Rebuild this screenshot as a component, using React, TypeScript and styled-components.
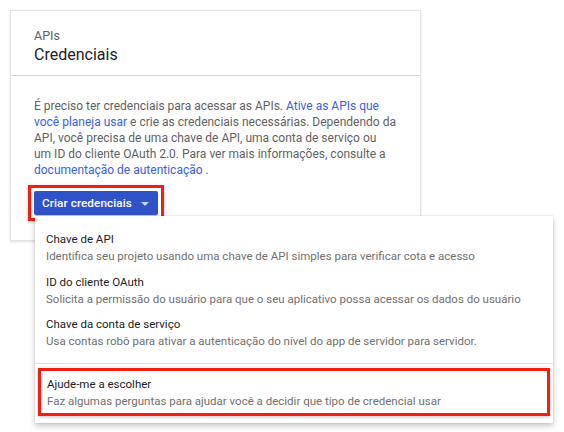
import React from "react";
import styled, { createGlobalStyle } from "styled-components";

const Global = createGlobalStyle`
  html, body { margin: 0; padding: 0; background: #ffffff; }
  body { font-family: Roboto, "Noto Sans", Arial, sans-serif; -webkit-font-smoothing: antialiased; }
  * { box-sizing: border-box; }
`;

const Page = styled.div`
  padding: 10px 0 0 10px;
  width: 564px;
  height: 432px;
`;

const Card = styled.section`
  width: 411px;
  height: 231px;
  border: 1px solid #e4e4e4;
  background: #fff;
  box-shadow: 0 1px 2px rgba(0, 0, 0, 0.12);
  display: flex;
  flex-direction: column;
`;

const Header = styled.header`
  padding: 18px 23px 9px;
  border-bottom: 1px solid #d6d6d6;
  display: flex;
  flex-direction: column;
`;

const Eyebrow = styled.div`
  font-size: 12.5px;
  line-height: 14px;
  color: #5f5f5f;
`;

const Title = styled.h1`
  margin: 0;
  font-size: 16px;
  font-weight: 400;
  line-height: 23px;
  color: #212121;
`;

const Body = styled.div`
  padding: 22px 23px 0;
  display: flex;
  flex-direction: column;
  align-items: flex-start;
`;

const Para = styled.p`
  margin: 0;
  font-size: 12px;
  line-height: 16px;
  color: #5f5f5f;
  white-space: nowrap;
`;

const Link = styled.a`
  color: #3b60d6;
  text-decoration: none;
`;

const Highlight = styled.div`
  position: relative;
  border: 3px solid #f01f0f;
  padding: 3px;
  margin-top: 7px;
  margin-left: -6px;
  box-shadow: 0 1px 3px rgba(0, 0, 0, 0.25);
`;

const Button = styled.button`
  display: flex;
  align-items: center;
  gap: 9px;
  height: 24px;
  padding: 0 9px 0 8px;
  border: none;
  border-radius: 2px;
  background: #2f52c6;
  color: #fff;
  font-family: Roboto, "Noto Sans", Arial, sans-serif;
  font-size: 11.7px;
  font-weight: 500;
  letter-spacing: 0.1px;
  box-shadow: 0 1px 1px rgba(0, 0, 0, 0.2);
`;

const Caret = styled.span`
  width: 0;
  height: 0;
  border-left: 4px solid transparent;
  border-right: 4px solid transparent;
  border-top: 4px solid #c9d3f2;
  margin-top: 1px;
`;

const Menu = styled.div`
  position: absolute;
  top: calc(100% - 2px);
  left: 4px;
  width: 518px;
  background: #fff;
  padding: 10px 0 7px;
  box-shadow: 0 0 1px rgba(0, 0, 0, 0.25), 0 3px 6px rgba(0, 0, 0, 0.22);
  display: flex;
  flex-direction: column;
  z-index: 2;
`;

const Item = styled.div<{ $inset?: boolean }>`
  padding: ${(p) => (p.$inset ? "5.5px 6px 4px" : "5px 11px 4.5px")};
  display: flex;
  flex-direction: column;
`;

const ItemTitle = styled.div`
  font-size: 11.5px;
  line-height: 17px;
  color: #212121;
`;

const ItemDesc = styled.div`
  font-size: 11.5px;
  line-height: 16px;
  color: #6f6f6f;
  white-space: nowrap;
`;

const Divider = styled.hr`
  margin: 9px 0 0;
  border: none;
  border-top: 1px solid #e0e0e0;
`;

const ItemHighlight = styled.div`
  margin: 4px 3px 0;
  border: 3px solid #f01f0f;
  box-shadow: 0 1px 3px rgba(0, 0, 0, 0.25);
`;

const items = [
  {
    title: "Chave de API",
    desc: "Identifica seu projeto usando uma chave de API simples para verificar cota e acesso",
  },
  {
    title: "ID do cliente OAuth",
    desc: "Solicita a permissão do usuário para que o seu aplicativo possa acessar os dados do usuário",
  },
  {
    title: "Chave da conta de serviço",
    desc: "Usa contas robô para ativar a autenticação do nível do app de servidor para servidor.",
  },
];

export default function App() {
  return (
    <>
      <Global />
      <Page>
        <Card>
          <Header>
            <Eyebrow>APIs</Eyebrow>
            <Title>Credenciais</Title>
          </Header>
          <Body>
            <Para>
              É preciso ter credenciais para acessar as APIs. <Link>Ative as APIs que</Link>
              <br />
              <Link>você planeja usar</Link> e crie as credenciais necessárias. Dependendo da
              <br />
              API, você precisa de uma chave de API, uma conta de serviço ou
              <br />
              um ID do cliente OAuth 2.0. Para ver mais informações, consulte a
              <br />
              <Link>documentação de autenticação</Link> .
            </Para>
            <Highlight>
              <Button>
                Criar credenciais
                <Caret />
              </Button>
              <Menu>
                {items.map((it) => (
                  <Item key={it.title}>
                    <ItemTitle>{it.title}</ItemTitle>
                    <ItemDesc>{it.desc}</ItemDesc>
                  </Item>
                ))}
                <Divider />
                <ItemHighlight>
                  <Item $inset>
                    <ItemTitle>Ajude-me a escolher</ItemTitle>
                    <ItemDesc>
                      Faz algumas perguntas para ajudar você a decidir que tipo de credencial usar
                    </ItemDesc>
                  </Item>
                </ItemHighlight>
              </Menu>
            </Highlight>
          </Body>
        </Card>
      </Page>
    </>
  );
}
